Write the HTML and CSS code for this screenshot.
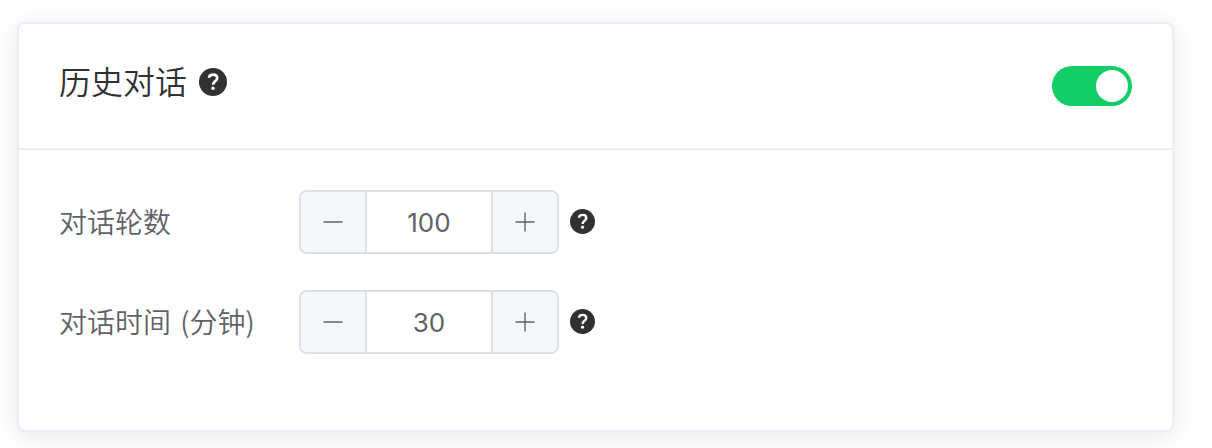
FILE: index.html
```html
<!DOCTYPE html>
<html lang="zh-CN">
<head>
<meta charset="utf-8">
<title>历史对话</title>
<link rel="stylesheet" href="styles.css">
</head>
<body>
<svg class="sprite" aria-hidden="true">
  <symbol id="help" viewBox="0 0 28 28">
    <circle cx="14" cy="14" r="14"/>
    <path class="mark" d="M10.100 9.800C10.200 7.800 11.700 6.600 14.100 6.600C16.500 6.600 18.200 8 18.200 10.100C18.200 11.900 17.100 12.700 15.800 13.600C14.600 14.500 14.100 15.100 14.100 16.800"/>
    <circle class="dot" cx="14" cy="20.300" r="1.700"/>
  </symbol>
  <symbol id="minus" viewBox="0 0 24 24"><path d="M2.500 12h19"/></symbol>
  <symbol id="plus" viewBox="0 0 24 24"><path d="M2.500 12h19M12 2.500v19"/></symbol>
</svg>
<section class="card">
  <header class="card-header">
    <h2 class="title">历史对话</h2>
    <svg class="help help-large"><use href="#help"/></svg>
    <span class="switch" role="switch" aria-checked="true"><span class="knob"></span></span>
  </header>
  <div class="card-body">
    <div class="row">
      <span class="label">对话轮数</span>
      <div class="stepper">
        <span class="step"><svg class="sign"><use href="#minus"/></svg></span>
        <span class="value">100</span>
        <span class="step"><svg class="sign"><use href="#plus"/></svg></span>
      </div>
      <svg class="help"><use href="#help"/></svg>
    </div>
    <div class="row">
      <span class="label">对话时间 (分钟)</span>
      <div class="stepper">
        <span class="step"><svg class="sign"><use href="#minus"/></svg></span>
        <span class="value">30</span>
        <span class="step"><svg class="sign"><use href="#plus"/></svg></span>
      </div>
      <svg class="help"><use href="#help"/></svg>
    </div>
  </div>
</section>
</body>
</html>
```
FILE: styles.css
```css
* { box-sizing: border-box; }
body {
  margin: 0;
  padding: 22px 38px 0 17px;
  height: 448px;
  overflow: hidden;
  background: #fff;
  color: #303133;
  font-family: "Noto Sans CJK SC", sans-serif;
  font-weight: 350;
}
.sprite { display: none; }
.card {
  height: 410px;
  border: 2px solid #ebeef5;
  border-radius: 8px;
  background: #fff;
  box-shadow: 0 4px 24px rgba(0, 0, 0, .1);
}
.card-header {
  display: flex;
  height: 126px;
  padding: 41px 40px 0;
  border-bottom: 2px solid #ebeef5;
}
.title {
  margin: 0 12px 0 0;
  font-size: 32px;
  line-height: 30px;
  font-weight: 350;
}
.help {
  width: 25px;
  height: 25px;
  fill: #303133;
}
.help-large { width: 28px; height: 28px; margin-top: 3px; }
.mark {
  fill: none;
  stroke: #fff;
  stroke-width: 2.7;
}
.dot { fill: #fff; }
.switch {
  display: flex;
  justify-content: flex-end;
  width: 80px;
  height: 40px;
  margin: 1px 0 0 auto;
  padding: 4px;
  border-radius: 20px;
  background: #13ce66;
}
.knob {
  width: 32px;
  height: 32px;
  border-radius: 50%;
  background: #fff;
}
.card-body {
  display: flex;
  flex-direction: column;
  gap: 36px;
  padding: 40px;
}
.row {
  display: flex;
  height: 64px;
  align-items: center;
}
.row .help { margin: -1px 0 0 11px; }
.label {
  width: 240px;
  padding-bottom: 2px;
  color: #606266;
  font-size: 28px;
  line-height: 62px;
  white-space: nowrap;
  word-spacing: 3px;
}
.stepper {
  display: flex;
  width: 260px;
  height: 64px;
  border: 2px solid #dcdfe6;
  border-radius: 8px;
  overflow: hidden;
  color: #606266;
}
.step {
  display: flex;
  width: 64px;
  align-items: center;
  justify-content: center;
  background: #f5f7fa;
}
.sign {
  width: 24px;
  height: 24px;
  fill: none;
  stroke: #606266;
  stroke-width: 1.4;
}
.value {
  flex: 1;
  border: solid #dcdfe6;
  border-width: 0 2px;
  text-align: center;
  font: 400 26px/62px Inter, sans-serif;
}
```
